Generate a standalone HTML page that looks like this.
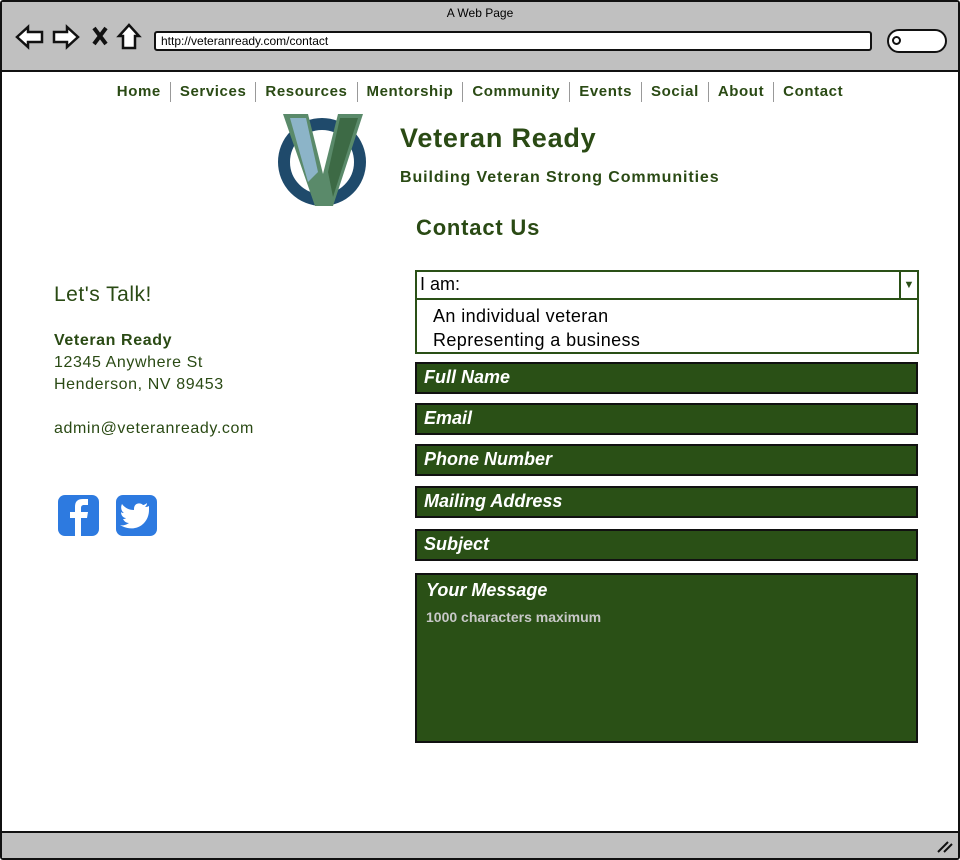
<!DOCTYPE html>
<html><head><meta charset="utf-8"><style>
*{margin:0;padding:0;box-sizing:border-box}
body{width:960px;height:860px;background:#fff;font-family:"Liberation Sans",sans-serif;position:relative;overflow:hidden}
.a{position:absolute}
.g{color:#2a4a14}
.fld{position:absolute;left:415px;width:503px;background:#2a5016;border:2px solid #111;color:#fff;font-style:italic;font-weight:bold;font-size:18px;padding-left:7px;line-height:27px}
.nav span{display:inline-block;padding:0 9px;border-left:1px solid #999;font-size:15px;font-weight:bold;color:#2a4a14;letter-spacing:0.6px}
.nav span:first-child{border-left:none}
</style></head><body>
<div class="a" style="left:0;top:0;width:960px;height:860px;border:2px solid #111;border-radius:3px"></div>
<div class="a" style="left:2px;top:2px;width:956px;height:70px;background:#c0c0c0;border-bottom:2px solid #111"></div>
<div class="a" style="left:0;top:6px;width:960px;text-align:center;font-size:12px">A Web Page</div>
<svg class="a" style="left:14px;top:22px" width="130" height="30" viewBox="0 0 130 30">
<path d="M3 15 L14 5 L14 10 L28 10 L28 20 L14 20 L14 25 Z" fill="#fff" stroke="#111" stroke-width="2.5"/>
<path d="M64 15 L53 5 L53 10 L40 10 L40 20 L53 20 L53 25 Z" fill="#fff" stroke="#111" stroke-width="2.5"/>
<path d="M80 6 L92 22 M92 6 L80 22" stroke="#111" stroke-width="4"/>
<path d="M115 3 L105 14 L109 14 L109 26 L121 26 L121 14 L125 14 Z" fill="#fff" stroke="#111" stroke-width="2.5"/>
</svg>
<div class="a" style="left:154px;top:31px;width:718px;height:20px;background:#fff;border:2px solid #111;border-radius:3px;font-size:12px;padding-left:5px;line-height:16px">http://veteranready.com/contact</div>
<div class="a" style="left:887px;top:29px;width:60px;height:24px;background:#fff;border:2px solid #111;border-radius:12px"></div>
<div class="a" style="left:892px;top:36px;width:9px;height:9px;border:2px solid #111;border-radius:50%"></div>
<div class="a nav" style="left:0;top:82px;width:960px;text-align:center;line-height:20px;white-space:nowrap"><span>Home</span><span>Services</span><span>Resources</span><span>Mentorship</span><span>Community</span><span>Events</span><span>Social</span><span>About</span><span>Contact</span></div>
<svg class="a" style="left:278px;top:112px" width="92" height="98" viewBox="0 0 92 98">
<circle cx="44" cy="50" r="38" fill="none" stroke="#1f4a6b" stroke-width="12"/>
<path d="M5 2 L30 2 L45 62 L60 2 L85 2 L55 94 L37 94 Z" fill="#5a8a6a"/>
<path d="M12 6 L28 6 L40 60 L30 70 Z" fill="#8cb4c8"/><path d="M62 6 L80 6 L55 85 L50 60 Z" fill="#3d6a45"/>
</svg>
<div class="a g" style="left:400px;top:123px;font-size:27px;font-weight:bold;letter-spacing:0.8px">Veteran Ready</div>
<div class="a g" style="left:400px;top:169px;font-size:16px;font-weight:bold;letter-spacing:0.9px">Building Veteran Strong Communities</div>
<div class="a g" style="left:416px;top:215px;font-size:22px;font-weight:bold;letter-spacing:0.8px">Contact Us</div>
<div class="a g" style="left:54px;top:283px;font-size:21px;letter-spacing:0.5px">Let's Talk!</div>
<div class="a g" style="left:54px;top:330px;font-size:16px;line-height:22px;letter-spacing:0.6px"><b>Veteran Ready</b><br>12345 Anywhere St<br>Henderson, NV 89453<br><br>admin@veteranready.com</div>
<svg class="a" style="left:57px;top:494px" width="102" height="42" viewBox="0 0 102 42">
<rect x="1" y="1" width="41" height="41" rx="7" fill="#2d7ae0"/>
<path d="M24 42 V24 H30 L31 18 H24 V14 C24 12 25 11 27 11 H31 V5 H26 C20 5 18 8 18 13 V18 H13 V24 H18 V42 Z" fill="#fff"/>
<rect x="59" y="1" width="41" height="41" rx="7" fill="#2d7ae0"/>
<path d="M92 12 C90 13 89 13 88 13 C89 12 90 11 90 9 C89 10 87 11 86 11 C83 8 77 9 77 15 V16 C72 16 68 14 65 10 C63 14 65 18 67 19 C66 19 65 19 64 18 C64 21 66 24 69 24 C68 25 67 25 66 25 C67 27 69 29 72 29 C69 31 66 32 63 31 C78 40 92 30 92 16 Z" fill="#fff"/>
</svg>
<div class="a" style="left:415px;top:270px;width:504px;height:84px;border:2px solid #2a5016;background:#fff"></div>
<div class="a" style="left:415px;top:270px;width:504px;height:30px;border-bottom:2px solid #2a5016;font-size:18px;padding-left:5px;line-height:28px">I am:</div>
<div class="a" style="left:899px;top:272px;width:18px;height:26px;border-left:2px solid #2a5016;color:#2a5016;font-size:11px;text-align:center;line-height:26px">▼</div>
<div class="a" style="left:433px;top:304px;font-size:18px;line-height:24px;letter-spacing:0.4px">An individual veteran<br>Representing a business</div>
<div class="fld" style="top:362px;height:32px">Full Name</div>
<div class="fld" style="top:403px;height:32px">Email</div>
<div class="fld" style="top:444px;height:32px">Phone Number</div>
<div class="fld" style="top:486px;height:32px">Mailing Address</div>
<div class="fld" style="top:529px;height:32px">Subject</div>
<div class="fld" style="top:573px;height:170px;padding-top:2px;padding-left:9px">Your Message<div style="font-style:normal;font-size:14px;color:#c8c8c8;line-height:26px">1000 characters maximum</div></div>
<div class="a" style="left:2px;top:831px;width:956px;height:27px;background:#c0c0c0;border-top:2px solid #111"></div>
<svg class="a" style="left:936px;top:838px" width="18" height="16"><path d="M2 14 L12 4 M8 14 L16 6" stroke="#111" stroke-width="2"/></svg>
</body></html>
